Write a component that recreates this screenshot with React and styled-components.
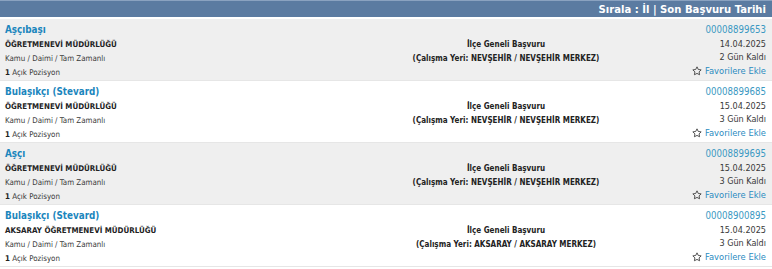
import React from "react";
import styled, { createGlobalStyle } from "styled-components";

const Global = createGlobalStyle`
  html, body { margin: 0; padding: 0; background: #fff; }
  body { font-family: "DejaVu Sans Condensed", "DejaVu Sans", Verdana, sans-serif; color: #333; }
`;

const Page = styled.div`
  width: 772px;
  display: flex;
  flex-direction: column;
`;

const Header = styled.div`
  height: 17px;
  box-sizing: border-box;
  background: #5b7ba1;
  border-top: 1px solid #8aa2c0;
  display: flex;
  justify-content: flex-end;
  align-items: center;
  padding-right: 6px;
  color: #fff;
  font-weight: bold;
  font-size: 11.2px;
  margin-bottom: 2px;
`;

const Row = styled.div`
  display: grid;
  grid-template-columns: 395px 212px 1fr;
  background: ${(p) => (p.$alt ? "#fff" : "#efefef")};
  border-bottom: 1px solid #e6e6e6;
  height: 62px;
  box-sizing: border-box;
  padding: 3px 5px 0 5px;
`;

const Left = styled.div`
  display: flex;
  flex-direction: column;
`;

const Title = styled.div`
  color: #1b86bd;
  font-weight: bold;
  font-size: 9.8px;
  line-height: 16px;
`;

const Org = styled.div`
  font-weight: bold;
  font-size: 7.9px;
  line-height: 14px;
  color: #222;
`;

const Small = styled.div`
  font-size: 7.9px;
  line-height: ${(p) => p.$lh || 14}px;
  color: #3a3a3a;
  b { font-weight: bold; color: #222; }
`;

const Center = styled.div`
  display: flex;
  flex-direction: column;
  align-items: center;
  padding-top: 16px;
  font-weight: bold;
  font-size: 8px;
  line-height: 14px;
  color: #222;
  white-space: nowrap;
`;

const Right = styled.div`
  display: flex;
  flex-direction: column;
  align-items: flex-end;
  padding-right: 1px;
`;

const Num = styled.div`
  color: #3a98c2;
  font-size: 9.6px;
  line-height: 15px;
`;

const Meta = styled.div`
  font-size: 9px;
  line-height: ${(p) => p.$lh}px;
  color: #3a3a3a;
`;

const Fav = styled.div`
  display: flex;
  align-items: center;
  gap: 3px;
  color: #2a8bbf;
  font-size: 9.3px;
  line-height: 13px;
`;

const Star = () => (
  <svg width="10" height="10" viewBox="0 0 24 24" fill="none" stroke="#444" strokeWidth="2.2" strokeLinejoin="round">
    <polygon points="12 2 15.1 8.3 22 9.3 17 14.1 18.2 21 12 17.8 5.8 21 7 14.1 2 9.3 8.9 8.3 12 2" />
  </svg>
);

const data = [
  { title: "Aşçıbaşı", org: "ÖĞRETMENEVİ MÜDÜRLÜĞÜ", city: "NEVŞEHİR", dist: "NEVŞEHİR MERKEZ", num: "00008899653", date: "14.04.2025", days: 2 },
  { title: "Bulaşıkçı (Stevard)", org: "ÖĞRETMENEVİ MÜDÜRLÜĞÜ", city: "NEVŞEHİR", dist: "NEVŞEHİR MERKEZ", num: "00008899685", date: "15.04.2025", days: 3 },
  { title: "Aşçı", org: "ÖĞRETMENEVİ MÜDÜRLÜĞÜ", city: "NEVŞEHİR", dist: "NEVŞEHİR MERKEZ", num: "00008899695", date: "15.04.2025", days: 3 },
  { title: "Bulaşıkçı (Stevard)", org: "AKSARAY ÖĞRETMENEVİ MÜDÜRLÜĞÜ", city: "AKSARAY", dist: "AKSARAY MERKEZ", num: "00008900895", date: "15.04.2025", days: 3 },
];

export default function App() {
  return (
    <Page>
      <Global />
      <Header>Sırala : İl | Son Başvuru Tarihi</Header>
      {data.map((d, i) => (
        <Row key={i} $alt={i % 2 === 1}>
          <Left>
            <Title>{d.title}</Title>
            <Org>{d.org}</Org>
            <Small>Kamu / Daimi / Tam Zamanlı</Small>
            <Small $lh={13}><b>1</b> Açık Pozisyon</Small>
          </Left>
          <Center>
            <div>İlçe Geneli Başvuru</div>
            <div>(Çalışma Yeri: {d.city} / {d.dist})</div>
          </Center>
          <Right>
            <Num>{d.num}</Num>
            <Meta $lh={14}>{d.date}</Meta>
            <Meta $lh={13}>{d.days} Gün Kaldı</Meta>
            <Fav><Star />Favorilere Ekle</Fav>
          </Right>
        </Row>
      ))}
    </Page>
  );
}
